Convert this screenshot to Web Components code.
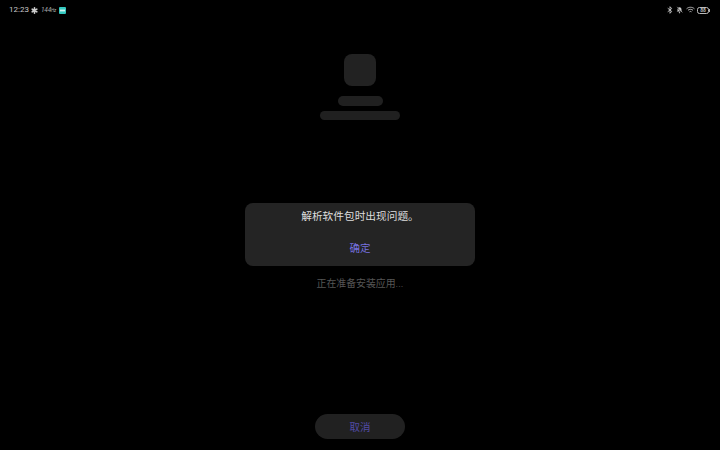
<!DOCTYPE html>
<html><head><meta charset="utf-8">
<style>
html,body{margin:0;padding:0;background:#000;}
body{width:720px;height:450px;overflow:hidden;font-family:"Roboto","Noto Sans CJK SC",sans-serif;}
</style></head><body>
<install-screen>
  <status-bar slot="status"></status-bar>
  <app-placeholder slot="app"></app-placeholder>
  <alert-dialog slot="dialog" message="解析软件包时出现问题。" action="确定"></alert-dialog>
  <span slot="progress">正在准备安装应用...</span>
  <pill-button slot="cancel">取消</pill-button>
</install-screen>
<script>
function def(name, css, html, init){
  customElements.define(name, class extends HTMLElement{
    constructor(){super();const r=this.attachShadow({mode:'open'});r.innerHTML='<style>'+css+'</style>'+html;}
    connectedCallback(){if(init)init(this);}
  });
}
const CJK='"Roboto","Noto Sans CJK SC",sans-serif';
def('install-screen',`
:host{display:flex;flex-direction:column;align-items:center;width:720px;height:450px;background:#000;font-family:${CJK};box-sizing:border-box}
.status{align-self:stretch;height:20px;flex:none}
.app{margin-top:34px;flex:none}
.dialog{margin-top:83px;flex:none}
.progress{margin-top:10px;height:15px;line-height:15px;font-size:9.9px;color:#565656;flex:none}
.cancel{margin-top:auto;margin-bottom:11px;flex:none}
`,`<div class="status"><slot name="status"></slot></div>
<div class="app"><slot name="app"></slot></div>
<div class="dialog"><slot name="dialog"></slot></div>
<div class="progress"><slot name="progress"></slot></div>
<div class="cancel"><slot name="cancel"></slot></div>`);
def('status-bar',`
:host{display:flex;justify-content:space-between;align-items:center;height:20px;padding:0 9px 0 9px;box-sizing:border-box;color:#c9c9c9}
.l,.r{display:flex;align-items:center}
.t{font-size:8px;color:#c8c8c8;width:22px;line-height:20px}
.hz{font:italic 6.500px "Roboto",sans-serif;color:#aaa;width:15px;margin:0 3px 0 3px;letter-spacing:-.2px;white-space:nowrap}
.hz small{font-size:4.500px}
.b{position:relative;display:flex;align-items:center;justify-content:center;width:12px;height:7px;border:.8px solid #bbb;border-radius:2.500px;box-sizing:border-box;font:bold 5px/6px "Roboto",sans-serif;color:#bbb;margin-right:2px}
.b::after{content:"";position:absolute;right:-2px;top:1.500px;width:1px;height:3px;background:#aaa}
svg{display:block}
`,`<div class="l"><span class="t">12:23</span>
<svg width="7" height="7" viewBox="0 0 7 7" stroke="#ccc" stroke-width="1.600" stroke-linecap="round"><path d="M3.500.8v5.400M1.200 2.200l4.600 2.600M1.200 4.800l4.600-2.600"/></svg>
<span class="hz">144<small>Hz</small></span>
<svg width="7" height="7" viewBox="0 0 7 7"><rect width="7" height="7" rx="1" fill="#35c9c0"/><rect x="1" y="2.600" width="5" height="1.800" fill="#d5f4f2"/></svg>
</div>
<div class="r">
<svg width="6" height="8" viewBox="0 0 6 8" fill="none" stroke="#c8c8c8" stroke-width=".9" style="margin-right:3px"><path d="M.7 2.200l4 3.200L3 7.300V.7l1.700 1.900-4 3.200"/></svg>
<svg width="7" height="8" viewBox="0 0 8 8" style="margin-right:3px"><path d="M4 .8c1.600 0 2.300 1.200 2.300 2.600v1.400l.9 1H.8l.9-1V3.400C1.700 2 2.400.8 4 .8z" fill="#c8c8c8"/><circle cx="4" cy="7" r=".8" fill="#c8c8c8"/><path d="M1 .8l6 6.400" stroke="#000" stroke-width="1"/><path d="M1.300.4l6 6.400" stroke="#c8c8c8" stroke-width=".7"/></svg>
<svg width="9" height="8" viewBox="0 0 10 8" fill="none" stroke="#c8c8c8" style="margin-right:2px"><path d="M.6 2.700C3 .4 7 .4 9.400 2.700M2.200 4.300c1.600-1.400 4-1.400 5.600 0M3.900 6c.7-.5 1.500-.5 2.200 0" stroke-width="1"/></svg>
<span class="b">88</span>
</div>`);
def('app-placeholder',`
:host{display:flex;flex-direction:column;align-items:center}
.i{width:32px;height:32px;border-radius:8px;background:#222}
.a{width:45px;height:10px;border-radius:5px;background:#202020;margin-top:10px}
.b{width:80px;height:9px;border-radius:4.500px;background:#202020;margin-top:5px}
`,`<div class="i"></div><div class="a"></div><div class="b"></div>`);
def('alert-dialog',`
:host{display:flex;flex-direction:column;align-items:center;width:230px;height:63px;border-radius:8px;background:#242424;box-sizing:border-box}
.m{margin-top:5px;height:16px;line-height:16px;font-size:10.700px;color:#dedede;transform:translateY(1px)}
.a{margin-top:16px;height:16px;line-height:16px;font-size:10.500px;color:#7671df;transform:translateY(1px)}
`,`<div class="m"></div><div class="a"></div>`,el=>{
  el.shadowRoot.querySelector('.m').textContent=el.getAttribute('message');
  el.shadowRoot.querySelector('.a').textContent=el.getAttribute('action');
});
def('pill-button',`
:host{display:flex;align-items:center;justify-content:center;width:90px;height:25px;border-radius:12.500px;background:#212121;color:#514ba6;font-size:10.500px}
`,`<slot></slot>`);
</script>
</body></html>
